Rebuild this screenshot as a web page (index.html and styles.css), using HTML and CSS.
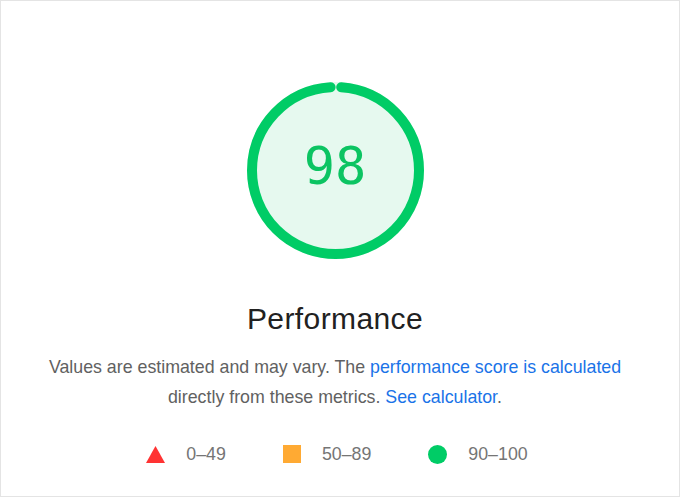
FILE: index.html
```html
<!DOCTYPE html>
<html lang="en">
<head>
<meta charset="utf-8">
<title>Performance</title>
<link rel="stylesheet" href="styles.css">
</head>
<body>
<div class="panel">
  <div class="gauge">
    <svg class="gauge-svg" width="177" height="177" viewBox="0 0 177 177">
      <circle class="gauge-base" cx="88.5" cy="88.5" r="83.5"></circle>
      <circle class="gauge-arc" cx="88.5" cy="88.5" r="83.5" transform="rotate(-90 88.5 88.5)"></circle>
    </svg>
    <div class="gauge-score">98</div>
  </div>
  <div class="title">Performance</div>
  <p class="desc">Values are estimated and may vary. The <a href="#" class="link">performance score is calculated</a> directly from these metrics. <a href="#" class="link">See calculator</a>.</p>
  <div class="legend">
    <div class="legend-item">
      <svg class="legend-icon" width="19" height="17" viewBox="0 0 19 17"><polygon points="9.5,0 19,17 0,17" fill="#ff3333"></polygon></svg>
      <span>0–49</span>
    </div>
    <div class="legend-item">
      <span class="legend-square"></span>
      <span>50–89</span>
    </div>
    <div class="legend-item">
      <span class="legend-dot"></span>
      <span>90–100</span>
    </div>
  </div>
</div>
</body>
</html>
```
FILE: styles.css
```css
html, body {
  margin: 0;
  padding: 0;
  background: #ffffff;
}
.panel {
  box-sizing: border-box;
  width: 680px;
  height: 497px;
  border: 1px solid #e4e4e4;
  padding: 81px 10px 0 0;
  display: flex;
  flex-direction: column;
  align-items: center;
  font-family: "Liberation Sans", Arial, sans-serif;
}
.gauge {
  position: relative;
  width: 177px;
  height: 177px;
}
.gauge-svg {
  display: block;
}
.gauge-base {
  fill: #e6f9ef;
  stroke: #e6f9ef;
  stroke-width: 10;
}
.gauge-arc {
  fill: none;
  stroke: #00cc66;
  stroke-width: 10;
  stroke-linecap: round;
  stroke-dasharray: 513 600;
  stroke-dashoffset: -5.8;
}
.gauge-score {
  position: absolute;
  left: 0;
  right: 0;
  top: 54px;
  text-align: center;
  font-family: "DejaVu Sans Mono", "Liberation Mono", monospace;
  font-size: 52px;
  line-height: 60px;
  color: #0cc462;
}
.title {
  margin-top: 43px;
  font-size: 30px;
  line-height: 34px;
  letter-spacing: 0.4px;
  color: #212121;
}
.desc {
  margin: 16px 0 0 0;
  max-width: 600px;
  text-align: center;
  font-size: 17.8px;
  line-height: 30px;
  color: #616161;
}
.link {
  color: #1a73e8;
  text-decoration: none;
}
.legend {
  margin-top: 32px;
  display: flex;
  align-items: center;
  gap: 57px;
  padding-left: 4px;
  font-size: 17.8px;
  line-height: 20px;
  color: #757575;
}
.legend-item {
  display: flex;
  align-items: center;
  gap: 21px;
}
.legend-icon {
  display: block;
}
.legend-square {
  display: block;
  width: 18px;
  height: 18px;
  background: #ffaa33;
}
.legend-dot {
  display: block;
  width: 19px;
  height: 19px;
  border-radius: 50%;
  background: #00cc66;
}
```
